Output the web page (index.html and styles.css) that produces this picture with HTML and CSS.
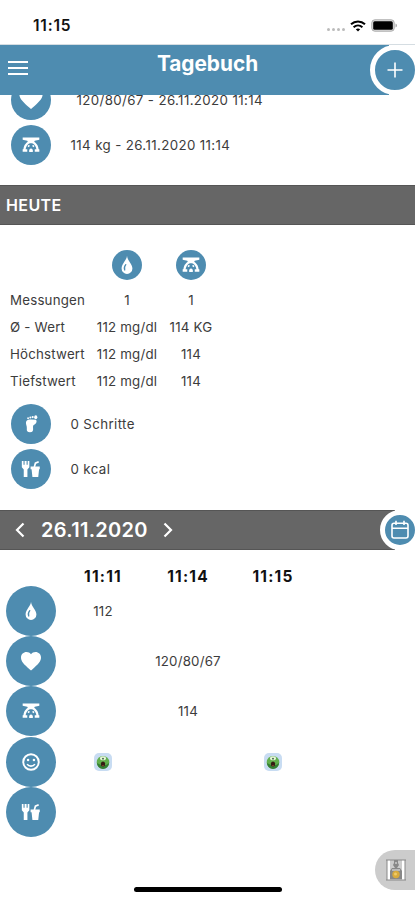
FILE: index.html
```html
<!DOCTYPE html>
<html lang="de">
    <head>
        <meta charset="UTF-8">
        <meta name="viewport" content="width=device-width, initial-scale=1">
        <title>Tagebuch</title>
        <link rel="stylesheet" href="styles.css">
    </head>
    <body>
        <!--Icons-->
        <svg class="sprite">
            <symbol id="drop" viewBox="0 0 24 24">
                <path fill="#fff" d="M12 1C12 6 5.500 10.500 5.500 16.200a6.500 6.500 0 0 0 13 0C18.500 10.500 12.500 7 12 1z"/>
                <path fill="none" stroke="#4e8cb0" stroke-width="1.500" stroke-linecap="round" d="M10.500 11.500c-1.800 2.300-2.400 4-1.200 6.500"/>
            </symbol>
            <symbol id="heart" viewBox="0 0 24 24">
                <path fill="#fff" d="M12 21.500 10.500 20.200C5 15.300 2 12.500 2 8.500 2 5.300 4.500 3 7.500 3c1.800 0 3.400.8 4.500 2.200C13.100 3.800 14.700 3 16.500 3 19.500 3 22 5.300 22 8.500c0 4-3 6.800-8.500 11.700z"/>
            </symbol>
            <symbol id="scale" viewBox="0 0 24 24">
                <path fill="#fff" d="M2 3h20v2.600l-5.500 1.200-1.700 3.200H9.200L7.500 6.800 2 5.600z"/>
                <path fill="none" stroke="#fff" stroke-width="2.700" d="M10 8.500C6.500 10.500 4.300 14 4 18.500M14 8.500c3.500 2 5.700 5.500 6 10"/>
                <path fill="#fff" d="M2 17h5.500v3.200H2zM16.500 17H22v3.200h-5.500zM9.800 17.800 12 16l2.200 1.800v2.700H9.800zM7.800 13.200l1.700-1.500 1.200 1.500-1.700 1.500zM13.300 13.200l1.200-1.500 1.700 1.500-1.200 1.500z"/>
            </symbol>
            <symbol id="foot" viewBox="0 0 24 24">
                <path fill="#fff" d="M6 10C6.500 7.200 8.500 6.400 12 6.700l6 .3c1.500 1.500.5 4.500-1.700 5.500-1.800.8-2 2-1.800 4.500.3 3-.5 5-3.700 5s-4.200-1.500-3.800-4.500c.3-3-1.400-5-1-7.500z"/>
                <circle fill="#fff" cx="8.500" cy="5.100" r="1.100"/>
                <circle fill="#fff" cx="11.200" cy="4.300" r="1.200"/>
                <circle fill="#fff" cx="14" cy="3.700" r="1.300"/>
                <ellipse fill="#fff" cx="17.700" cy="3.800" rx="1.900" ry="2.300"/>
            </symbol>
            <symbol id="food" viewBox="0 0 24 24">
                <path fill="#fff" d="M1 2.500h2v4.500h1.300V2.500h2.400v4.500H8V2.500h2v7.300l-2.300 2.700V21.500H3.300v-9L1 9.800zM11.500 9h11v3.200h-.8L20.700 21.500h-7l-1-9.300h-1.200z"/>
                <path fill="none" stroke="#fff" stroke-width="2" d="M16 9.500 17.300 5l3.900-1.800"/>
            </symbol>
            <symbol id="smile" viewBox="0 0 24 24">
                <circle fill="none" stroke="#fff" stroke-width="2.300" cx="12" cy="12" r="9.300"/>
                <path fill="none" stroke="#fff" stroke-width="1.900" d="M7.300 14.500c2.300 3.300 7.100 3.300 9.400 0"/>
                <circle fill="#fff" cx="8.500" cy="9.500" r="1.500"/>
                <circle fill="#fff" cx="15.500" cy="9.500" r="1.500"/>
            </symbol>
            <symbol id="monster" viewBox="0 0 20 20">
                <rect fill="#c8dcf2" x="1" y="1" width="18" height="18" rx="5"/>
                <circle fill="#62b04c" cx="10" cy="10.300" r="6.300"/>
                <path fill="#357f34" d="M4 11a6 6 0 0 0 12 0l-3 2-5 0z"/>
                <ellipse fill="#e6f4d8" cx="10" cy="6.300" rx="3" ry="2"/>
                <circle fill="#32593c" cx="10" cy="6.700" r=".9"/>
                <ellipse fill="#351d13" cx="10" cy="12" rx="2.200" ry="2.600"/>
                <path fill="#a74937" d="M8.800 13.200h2.400L10 14.500z"/>
            </symbol>
        </svg>

        <div class="phone">
            <div class="status">
                <span class="clock">11:15</span>
                <div class="signal">
                    <i></i><i></i><i></i><i></i>
                </div>
                <svg class="wifi" viewBox="0 0 16 12">
                    <path fill="none" stroke="#000" stroke-width="2" d="M1 4.300c4-3.800 10-3.800 14 0M3.600 7.200c2.600-2.400 6.200-2.400 8.800 0"/>
                    <path fill="#000" d="M5.800 9.300c1.300-1.200 3.100-1.200 4.400 0L8 11.600z"/>
                </svg>
                <svg class="battery" viewBox="0 0 27 13">
                    <rect fill="#ddd" stroke="#aaa" x=".8" y=".8" width="22.400" height="11.400" rx="3"/>
                    <rect fill="#000" x="2.200" y="2.200" width="19.600" height="8.600" rx="1.500"/>
                    <path fill="#aaa" d="M24.500 4.500c2 .8 2 3.200 0 4z"/>
                </svg>
            </div>

            <header class="header">
                <div class="menu"><span></span><span></span><span></span></div>
                <h1>Tagebuch</h1>
                <div class="add">
                    <svg viewBox="0 0 16 16"><path stroke="#fff" stroke-width="1.600" d="M8 .5v15M.5 8h15"/></svg>
                </div>
            </header>

            <main class="content">
                <div class="list last">
                    <div class="entry shift"><div class="circle"><svg class="big"><use href="#heart"/></svg></div><span>120/80/67 - 26.11.2020 11:14</span></div>
                    <div class="entry"><div class="circle"><svg><use href="#scale"/></svg></div><span>114 kg - 26.11.2020 11:14</span></div>
                </div>

                <div class="bar"><h2>HEUTE</h2></div>

                <table class="today">
                    <tr class="icons">
                        <td></td>
                        <td><div class="circle small"><svg><use href="#drop"/></svg></div></td>
                        <td><div class="circle small"><svg><use href="#scale"/></svg></div></td>
                    </tr>
                    <tr><th>Messungen</th><td>1</td><td>1</td></tr>
                    <tr><th>Ø - Wert</th><td>112 mg/dl</td><td>114 KG</td></tr>
                    <tr><th>Höchstwert</th><td>112 mg/dl</td><td>114</td></tr>
                    <tr><th>Tiefstwert</th><td>112 mg/dl</td><td>114</td></tr>
                </table>

                <div class="list steps">
                    <div class="entry"><div class="circle"><svg><use href="#foot"/></svg></div><span>0 Schritte</span></div>
                    <div class="entry"><div class="circle"><svg><use href="#food"/></svg></div><span>0 kcal</span></div>
                </div>

                <div class="bar date">
                    <svg class="arrow" viewBox="0 0 10 16"><path d="M8.500 1.500 2 8l6.500 6.500"/></svg>
                    <h2>26.11.2020</h2>
                    <svg class="arrow" viewBox="0 0 10 16"><path d="M1.500 1.500 8 8l-6.500 6.500"/></svg>
                    <div class="calendar">
                        <svg viewBox="0 0 20 20"><path fill="none" stroke="#fff" stroke-width="1.600" d="M4 3.300h12q2 0 2 2V16q0 2-2 2H4q-2 0-2-2V5.300q0-2 2-2zM2 8.300h16M6 .8V5M14 .8V5"/></svg>
                    </div>
                </div>

                <!--Tagesverlauf-->
                <div class="times">
                    <span></span><b>11:11</b><b>11:14</b><b>11:15</b>
                </div>
                <div class="day">
                    <div class="circle large"><svg><use href="#drop"/></svg></div><span>112</span><span></span><span></span>
                    <div class="circle large"><svg class="mid"><use href="#heart"/></svg></div><span></span><span>120/80/67</span><span></span>
                    <div class="circle large"><svg><use href="#scale"/></svg></div><span></span><span>114</span><span></span>
                    <div class="circle large"><svg><use href="#smile"/></svg></div><span><svg><use href="#monster"/></svg></span><span></span><span><svg><use href="#monster"/></svg></span>
                    <div class="circle large"><svg><use href="#food"/></svg></div><span></span><span></span><span></span>
                </div>
            </main>

            <div class="tab">
                <svg viewBox="0 0 20 22">
                    <path fill="#fff" d="M1 1h18v20H1z"/>
                    <path fill="#ccc" d="M4 1h12v20H4z"/>
                    <path fill="none" stroke="#888" d="M0 1h20M0 21h20M1 1v20M19 1v20"/>
                    <path fill="#888" d="M8 1h4v3l1 2-2 3h3l2 3v8H4v-8l2-3h3L7 6l1-2z"/>
                    <path fill="#bbb" d="M9 3h2v2H9zM6 10h8v2H6z"/>
                    <circle fill="#d8ab3d" cx="10" cy="15.500" r="3.700"/>
                    <circle fill="#f0cb69" cx="9.500" cy="15" r="1.500"/>
                </svg>
            </div>
            <div class="home"></div>
        </div>
    </body>
</html>
```
FILE: styles.css
```css
body{
    margin: 0;
    background-color: white;
    color: #3c3c3c;
    font-family: Inter, "Liberation Sans", sans-serif;
    font-size: 13.3px;
}
h1, h2{
    margin: 0;
}
.sprite{
    display: none;
}
.phone{
    position: relative;
    width: 415px;
    height: 900px;
    overflow: hidden;
}
/* Statusleiste */
.status{
    display: flex;
    align-items: center;
    box-sizing: border-box;
    height: 45px;
    padding: 7px 17px 0 33px;
    border-bottom: 1px solid #d5dde2;
}
.clock{
    color: #111;
    font-size: 15.5px;
    font-weight: 600;
    letter-spacing: 0.8px;
}
.signal{
    display: flex;
    gap: 2px;
    margin: 8px 5px 0 auto;
}
.signal i{
    width: 3px;
    height: 3px;
    border-radius: 50%;
    background-color: #bbb;
}
.wifi{
    width: 16px;
    height: 12px;
    margin-right: 5px;
}
.battery{
    width: 27px;
    height: 13px;
}
/* Kopfzeile */
.header{
    position: relative;
    height: 50px;
    background-color: #4e8cb0;
}
.header h1{
    padding-top: 5px;
    color: white;
    font-size: 20.8px;
    line-height: 28px;
    font-weight: 700;
    text-align: center;
}
.menu{
    position: absolute;
    left: 8px;
    top: 16px;
    display: flex;
    flex-direction: column;
    gap: 4px;
}
.menu span{
    width: 20px;
    height: 2px;
    background-color: white;
}
/* weisse Ecke rechts hinter dem Knopf */
.header::after, .date::after{
    content: "";
    position: absolute;
    right: 0;
    top: 0;
    width: 26px;
    height: 50px;
    background-color: white;
}
.add{
    position: absolute;
    z-index: 1;
    right: -5px;
    top: 0;
    display: flex;
    align-items: center;
    justify-content: center;
    box-sizing: border-box;
    width: 50px;
    height: 50px;
    border: 5px solid white;
    border-radius: 50%;
    background-color: #4e8cb0;
}
.add svg{
    width: 16px;
    height: 16px;
}
/* Inhalt */
.content{
    height: 805px;
    overflow: hidden;
}
.list{
    display: flex;
    flex-direction: column;
    gap: 5px;
    padding: 10px 0 20px 10.5px;
}
.last{
    margin-top: -25px;
}
.steps{
    padding-bottom: 21px;
}
.entry{
    display: flex;
    align-items: center;
    gap: 20px;
    height: 40px;
    letter-spacing: 0.37px;
}
.shift{
    gap: 26px;
}
.circle{
    display: flex;
    align-items: center;
    justify-content: center;
    width: 40px;
    height: 40px;
    border-radius: 50%;
    background-color: #4e8cb0;
}
.circle svg{
    width: 20px;
    height: 20px;
}
.circle .big{
    width: 28px;
    height: 28px;
    margin-bottom: 4px;
}
.circle .mid{
    width: 24px;
    height: 24px;
}
.small{
    width: 30px;
    height: 30px;
    margin: 0 auto;
}
.large{
    width: 50px;
    height: 50px;
}
.bar{
    display: flex;
    align-items: center;
    position: relative;
    box-sizing: border-box;
    height: 40px;
    padding-left: 6px;
    border-top: 1px solid #555;
    border-bottom: 1px solid #555;
    background-color: #666;
}
.bar h2{
    color: white;
    font-size: 16px;
    font-weight: 600;
    letter-spacing: 0.4px;
}
.today{
    margin: 22px 0 0 8px;
    border-collapse: collapse;
    table-layout: fixed;
    width: 215px;
    letter-spacing: 0.2px;
}
.today td, .today th{
    height: 27px;
    padding: 0;
    font-weight: 400;
    text-align: center;
    white-space: nowrap;
}
.today th{
    padding-left: 2px;
    text-align: left;
}
.today .icons td{
    height: 36px;
    padding-bottom: 3px;
}
.today .icons td:first-child{
    width: 87px;
}
.today .icons td:nth-child(2){
    width: 64px;
}
.date{
    padding-left: 15px;
}
.date h2{
    margin: 0 15px 0 16px;
    font-size: 20px;
    letter-spacing: 0.3px;
}
.date::after{
    top: -1px;
    width: 20px;
    height: 40px;
}
.arrow{
    width: 10px;
    height: 16px;
    fill: none;
    stroke: white;
    stroke-width: 2.2;
}
.calendar{
    position: absolute;
    z-index: 1;
    right: -5px;
    top: -1px;
    display: flex;
    align-items: center;
    justify-content: center;
    box-sizing: border-box;
    width: 40px;
    height: 40px;
    border: 5px solid white;
    border-radius: 50%;
    background-color: #4e8cb0;
}
.calendar svg{
    width: 20px;
    height: 20px;
}
/* Tagesverlauf */
.times, .day{
    display: grid;
    grid-template-columns: 55px 85px 85px 85px;
    align-items: center;
    padding-left: 5.5px;
    text-align: center;
}
.times{
    height: 20px;
    padding-top: 16px;
}
.times b{
    color: #111;
    font-size: 15.5px;
    font-weight: 700;
    letter-spacing: 1.2px;
}
.day{
    grid-auto-rows: 50.2px;
    letter-spacing: 0.2px;
}
.day span svg{
    width: 20px;
    height: 20px;
    vertical-align: middle;
}
.tab{
    position: absolute;
    right: 0;
    top: 850px;
    display: flex;
    align-items: center;
    box-sizing: border-box;
    width: 40px;
    height: 40px;
    padding-left: 11px;
    border-radius: 20px 0 0 20px;
    background-color: #ccc;
}
.tab svg{
    width: 20px;
    height: 22px;
}
.home{
    position: absolute;
    left: 134px;
    top: 887px;
    width: 148px;
    height: 5px;
    border-radius: 3px;
    background-color: black;
}
```
